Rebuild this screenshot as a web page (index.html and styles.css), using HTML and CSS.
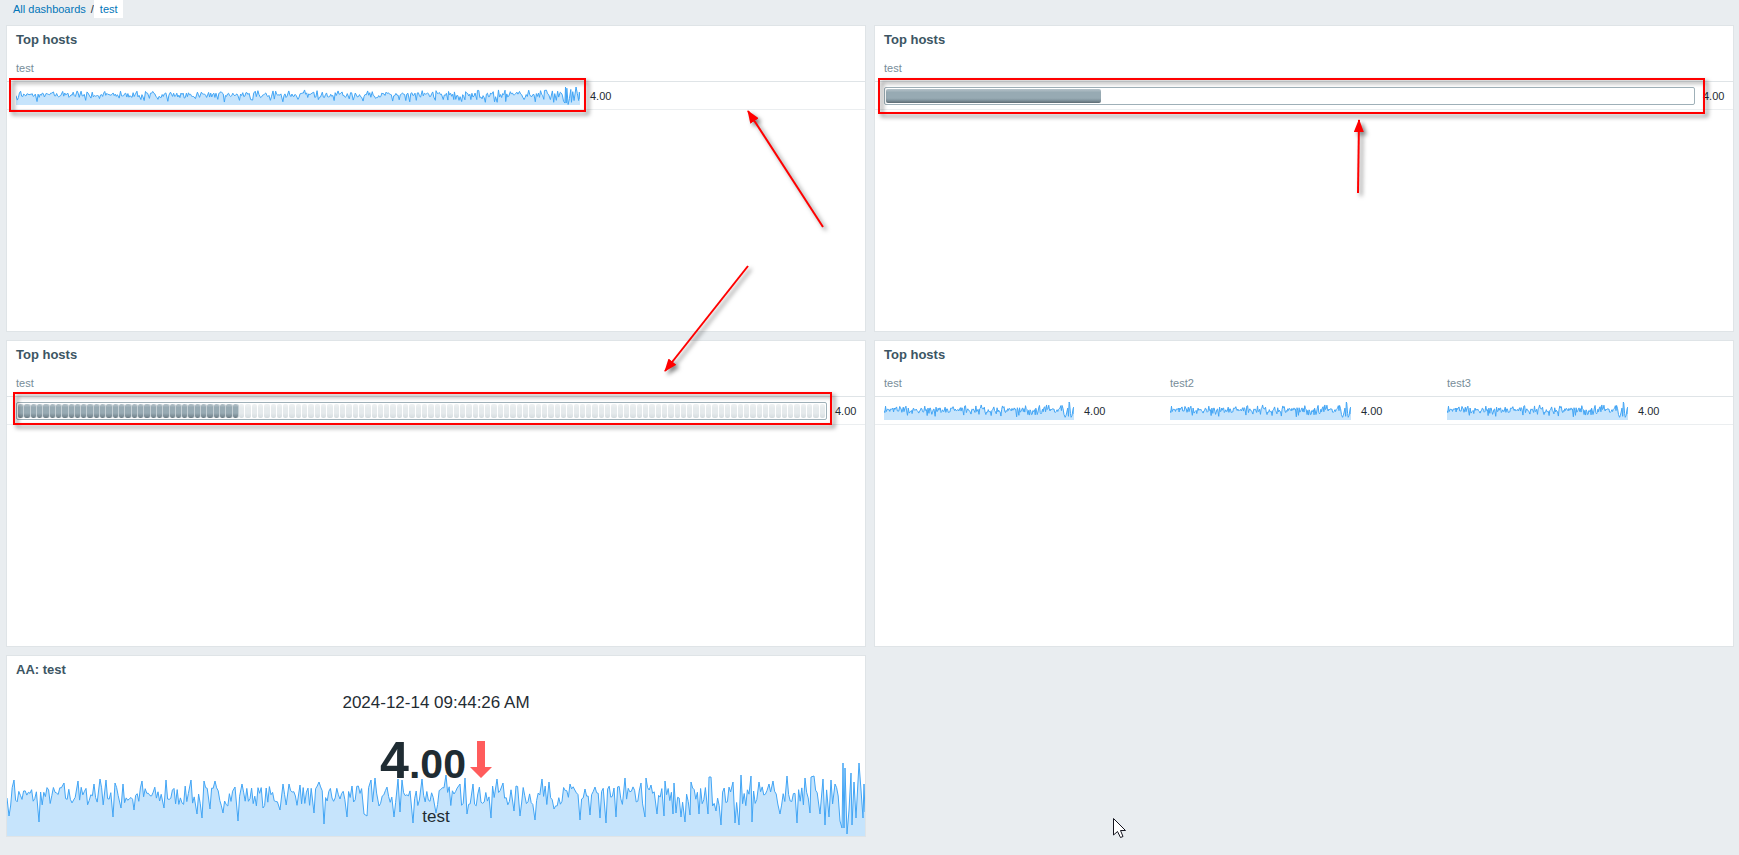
FILE: index.html
```html
<!DOCTYPE html>
<html lang="en">
<head>
  <meta charset="UTF-8">
  <meta name="viewport" content="width=device-width, initial-scale=1">
  <title>test</title>

  <link rel="stylesheet" href="styles.css">
</head>

<body>

  <nav class="breadcrumbs">
    <a href="#">All dashboards</a>
    <span class="slash">/</span>
    <a href="#" class="selected">test</a>
  </nav>

  <main class="dashboard">

    <section class="widget">
      <h4>Top hosts</h4>
      <table>
        <colgroup><col><col class="col-rest"></colgroup>
        <thead>
          <tr><th colspan="2">test</th></tr>
        </thead>
        <tbody>
          <tr>
            <td><svg class="spark" data-step="1"></svg></td>
            <td class="value">4.00</td>
          </tr>
        </tbody>
      </table>
    </section>

    <section class="widget">
      <h4>Top hosts</h4>
      <table>
        <colgroup><col><col class="col-narrow"></colgroup>
        <thead>
          <tr><th colspan="2">test</th></tr>
        </thead>
        <tbody>
          <tr>
            <td class="bar-cell"><div class="gauge"><div class="gauge-fill" style="width: 26.6%"></div></div></td>
            <td class="value">4.00</td>
          </tr>
        </tbody>
      </table>
    </section>

    <section class="widget">
      <h4>Top hosts</h4>
      <table>
        <colgroup><col><col class="col-narrow"></colgroup>
        <thead>
          <tr><th colspan="2">test</th></tr>
        </thead>
        <tbody>
          <tr>
            <td class="bar-cell"><div class="gauge lcd" id="lcd"></div></td>
            <td class="value">4.00</td>
          </tr>
        </tbody>
      </table>
    </section>

    <section class="widget">
      <h4>Top hosts</h4>
      <table>
        <colgroup>
          <col class="col-first"><col class="col-value">
          <col><col class="col-value">
          <col><col class="col-last">
        </colgroup>
        <thead>
          <tr>
            <th colspan="2">test</th>
            <th colspan="2">test2</th>
            <th colspan="2">test3</th>
          </tr>
        </thead>
        <tbody>
          <tr>
            <td><svg class="spark" data-step="2"></svg></td>
            <td class="value">4.00</td>
            <td><svg class="spark" data-step="2"></svg></td>
            <td class="value">4.00</td>
            <td><svg class="spark" data-step="2"></svg></td>
            <td class="value">4.00</td>
          </tr>
        </tbody>
      </table>
    </section>

    <section class="widget item">
      <svg class="spark item-chart" data-step="1"></svg>
      <h4>AA: test</h4>
      <div class="item-body">
        <div class="item-text">2024-12-14 09:44:26 AM</div>
        <div class="item-value">
          <span>4<span class="decimals">.00</span></span>
          <svg class="arrow-down" width="22" height="37" viewBox="0 0 22 37">
            <path d="M7 0h8v26h7L11 37 0 26h7z"/>
          </svg>
        </div>
        <div class="item-text">test</div>
      </div>
    </section>

  </main>

  <!-- red marks and mouse pointer on top of the dashboard -->
  <svg class="marks">
    <defs>
      <marker id="head" markerUnits="userSpaceOnUse" markerWidth="13" markerHeight="10" refX="12" refY="5" orient="auto">
        <path d="M13 5L0 0v10z" fill="#f00"/>
      </marker>
    </defs>
    <g class="red">
      <rect x="10" y="79" width="575" height="32"/>
      <rect x="879" y="79" width="825" height="34"/>
      <rect x="14" y="393" width="817" height="31"/>
      <path d="M823 227L748 111" marker-end="url(#head)"/>
      <path d="M1358 193L1359 120" marker-end="url(#head)"/>
      <path d="M748 266L665 371" marker-end="url(#head)"/>
    </g>
    <path class="pointer" transform="translate(1113 818)" d="M.5.5v16.5l4-3.500 3 6 2.500-1-2.500-6h5z"/>
  </svg>

  <script src="script.js"></script>

</body>
</html>
```
FILE: styles.css
```css
* {
  box-sizing: border-box;
}

body {
  margin: 0;
  min-height: 100vh;
  background: #e9edf0;
  color: #1f2c33;
  font-family: Arial, "Liberation Sans", sans-serif;
  font-size: 11px;
  line-height: 18px;
  position: relative;
}

a {
  color: #0275b8;
  text-decoration: none;
}

a:hover {
  text-decoration: underline;
}

.breadcrumbs {
  display: flex;
  height: 25px;
  padding-left: 13px;
}

.slash {
  margin-left: 5px;
}

.selected {
  height: 18px;
  padding: 0 5px 0 6px;
  background: #fff;
}

.dashboard {
  display: grid;
  grid-template-columns: 1fr 1fr;
  grid-template-rows: 307px 307px auto;
  gap: 8px;
  padding: 0 5px 19px 6px;
}

.widget {
  background: #fff;
  border: 1px solid #dfe4e7;
  min-width: 0;
}

h4 {
  margin: 0;
  padding: 0 9px 2px;
  font-size: 13px;
  line-height: 27px;
  color: #3c5563;
}

table {
  width: 100%;
  table-layout: fixed;
  border-collapse: separate;
  border-spacing: 0;
}

th {
  height: 27px;
  padding: 0 9px;
  border-bottom: 1px solid #dfe4e7;
  color: #768d99;
  font-weight: normal;
  text-align: left;
}

td {
  height: 28px;
  padding: 5px 5px 4px 9px;
  border-bottom: 1px solid #ebeef0;
}

.bar-cell {
  padding-right: 3px;
}

.value {
  padding: 5px 0 4px 5px;
}

.col-rest {
  width: 280px;
}

.col-narrow {
  width: 35px;
}

.col-first {
  width: 204px;
}

.col-value {
  width: 82px;
}

.col-last {
  width: 100px;
}

.spark {
  display: block;
  width: 100%;
  height: 18px;
}

.spark .line {
  fill: none;
  stroke: #42a5f5;
  stroke-width: 1;
  vector-effect: non-scaling-stroke;
}

.spark .area {
  fill: #c6e4fc;
}

.gauge {
  height: 18px;
  padding: 1px;
  border: 1px solid #9fb0b8;
  border-radius: 2px;
}

.gauge-fill {
  height: 14px;
  border-radius: 2px;
  background: linear-gradient(#b5c2c9, #97aab3 25%, #97aab3 65%, #8496a0 80%, #5c6b73);
}

.lcd {
  display: flex;
  gap: 1px;
}

.lcd span {
  flex: 1;
  border-radius: 2px;
  background: linear-gradient(#eff2f3, #e5eaec 30%, #e5eaec 65%, #d5dcdf);
}

.lcd .on {
  background: linear-gradient(#b5c2c9, #97aab3 25%, #97aab3 65%, #6c7c85);
  box-shadow: 1px 0 #c5cfd4;
}

.item {
  position: relative;
}

.item-chart {
  position: absolute;
  left: 0;
  bottom: 0;
  height: 73px;
}

.item-body {
  position: relative;
  display: flex;
  flex-direction: column;
  align-items: center;
  gap: 21px;
  padding: 8px 0 9px;
}

.item-text {
  font-size: 17px;
  line-height: 20px;
}

.item-value {
  display: flex;
  align-items: baseline;
  gap: 4px;
  height: 52px;
  font-size: 52px;
  line-height: 52px;
  font-weight: bold;
}

.decimals {
  font-size: 41px;
  line-height: 1;
}

.arrow-down {
  fill: #ff5c5c;
}

.marks {
  position: absolute;
  top: 0;
  left: 0;
  width: 100%;
  height: 100%;
  pointer-events: none;
}

.red {
  fill: none;
  stroke: #f00;
  stroke-width: 2;
  filter: drop-shadow(3px 3px 2px rgba(0, 0, 0, 0.5));
}

.red marker path {
  stroke: none;
}

.pointer {
  fill: #fff;
  stroke: #14141e;
}
```
FILE: script.js
```javascript
const WIDTH = 858;
const HEIGHT = 73;

// peaks and dips of the item history: x, value
const peaks = [
  [0,38],[2,20],[7,56],[32,14],[57,53],[71,55],[87,52],[93,57],[99,56],[106,19],[108,53],[114,28],
  [116,52],[127,26],[135,55],[157,28],[159,56],[184,56],[190,22],[195,18],[197,55],[203,27],[208,55],
  [216,23],[228,49],[231,15],[235,52],[256,28],[273,26],[276,52],[282,52],[293,51],[307,23],[312,54],
  [317,12],[340,19],[345,50],[357,22],[360,20],[364,56],[368,58],[372,30],[387,19],[391,57],[393,24],
  [395,56],[406,13],[415,57],[429,23],[439,61],[453,52],[458,58],[460,22],[466,52],[484,18],[490,57],
  [496,53],[507,25],[509,50],[513,20],[528,16],[535,57],[542,54],[547,27],[563,52],[573,16],[578,47],
  [583,21],[588,49],[593,18],[599,13],[607,48],[609,19],[618,58],[634,53],[638,19],[639,58],[644,51],
  [650,22],[657,20],[658,55],[666,22],[667,53],[669,23],[674,19],[678,14],[683,21],[684,54],[692,22],
  [701,22],[702,59],[704,59],[709,25],[714,11],[726,54],[728,13],[732,11],[734,61],[744,60],[745,14],
  [752,54],[762,52],[766,55],[773,22],[780,60],[790,13],[798,58],[803,23],[804,59],[807,60],[813,22],
  [816,57],[818,11],[822,19],[824,56],[828,52],[833,15],[835,8],[836,73],[837,8],[838,68],[840,2],
  [842,26],[844,63],[845,11],[847,54],[849,18],[852,73],[854,46],[856,18],[857,52],[858,24]
];

let seed = 7;
function random() {
  seed = (seed * 16807) % 2147483647;
  return seed / 2147483647;
}

// small values between two peaks
const points = [];
peaks.forEach(([x, v], i) => {
  points.push([x, v]);
  const next = peaks[i + 1];
  if (next) {
    for (let px = x + 1.6; px < next[0] - 1.4; px += 1.6) {
      points.push([px, 40 + (random() - 0.5) * 20]);
    }
  }
});

document.querySelectorAll(".spark").forEach(svg => {
  const step = Number(svg.dataset.step);
  const list = points.filter((p, i) => i % step === 0 || i === points.length - 1);
  const line = list.map(([x, v]) => `${x.toFixed(1)},${(HEIGHT - v).toFixed(1)}`).join(" ");

  svg.setAttribute("viewBox", `0 0 ${WIDTH} ${HEIGHT}`);
  svg.setAttribute("preserveAspectRatio", "none");
  svg.innerHTML = `
    <polygon class="area" points="0,${HEIGHT} ${line} ${WIDTH},${HEIGHT}"/>
    <polyline class="line" points="${line}"/>
  `;
});

const lcd = document.getElementById("lcd");
for (let i = 0; i < 128; i++) {
  const cell = document.createElement("span");
  if (i < 35) cell.className = "on";
  lcd.appendChild(cell);
}
```
